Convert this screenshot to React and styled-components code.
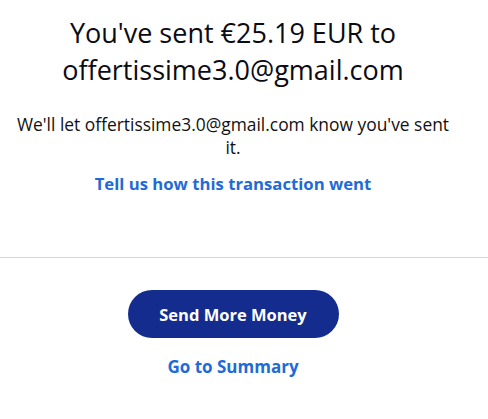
import styled, { createGlobalStyle } from "styled-components";

const Global = createGlobalStyle`
  * {
    box-sizing: border-box;
  }
  body {
    margin: 0;
    background: #fff;
    font-family: "Open Sans", Lato, sans-serif;
    color: #001c64;
  }
`;

const Page = styled.main`
  display: flex;
  flex-direction: column;
  width: 488px;
`;

const Top = styled.section`
  display: flex;
  flex-direction: column;
  align-items: center;
  width: 466px;
  padding-top: 14px;
  padding-bottom: 61px;
`;

const Heading = styled.h1`
  margin: 0;
  font-size: 27px;
  line-height: 37px;
  font-weight: 400;
  color: #0b0b14;
  text-align: center;
`;

const Note = styled.p`
  margin: 25px 0 0;
  font-size: 17.4px;
  line-height: 23px;
  color: #111;
  text-align: center;
  white-space: nowrap;
`;

const TextLink = styled.a`
  display: block;
  margin-top: ${(p) => p.$gap || 0}px;
  font-size: ${(p) => p.$size || 16.7}px;
  line-height: 24px;
  font-weight: 700;
  color: #1f6bd6;
  text-decoration: none;
  text-align: center;
`;

const Divider = styled.hr`
  margin: 0;
  border: 0;
  border-top: 1px solid #dcd7cc;
  width: 100%;
`;

const Actions = styled.section`
  display: flex;
  flex-direction: column;
  align-items: center;
  width: 466px;
  padding-top: 32px;
`;

const Primary = styled.button`
  width: 211px;
  height: 48px;
  border: 0;
  border-radius: 24px;
  background: #142c8e;
  color: #fff;
  font-family: inherit;
  font-size: 16.5px;
  font-weight: 700;
  cursor: pointer;
`;

export default function App() {
  return (
    <>
      <Global />
      <Page>
        <Top>
          <Heading>
            You've sent €25.19 EUR to
            <br />
            offertissime3.0@gmail.com
          </Heading>
          <Note>
            We'll let offertissime3.0@gmail.com know you've sent
            <br />
            it.
          </Note>
          <TextLink href="#" $gap={13}>Tell us how this transaction went</TextLink>
        </Top>
        <Divider />
        <Actions>
          <Primary>Send More Money</Primary>
          <TextLink href="#" $gap={17} $size={17}>Go to Summary</TextLink>
        </Actions>
      </Page>
    </>
  );
}
